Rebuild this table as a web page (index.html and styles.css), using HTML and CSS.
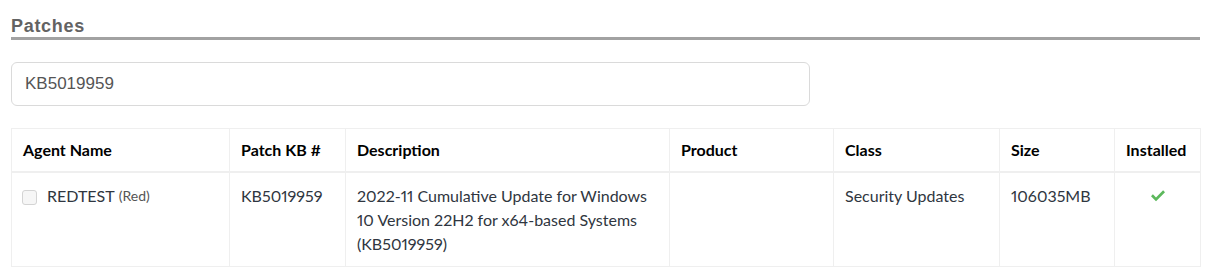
FILE: index.html
```html
<!DOCTYPE html>
<html>
<head>
<meta charset="utf-8">
<link rel="stylesheet" href="styles.css">
</head>
<body>
<div class="page">
  <h2 class="section-title">Patches</h2>
  <div class="search">
    <input class="search-input" type="text" value="KB5019959">
  </div>
  <table class="patch-table">
    <colgroup>
      <col class="c-agent">
      <col class="c-kb">
      <col class="c-desc">
      <col class="c-prod">
      <col class="c-class">
      <col class="c-size">
      <col class="c-inst">
    </colgroup>
    <thead>
      <tr>
        <th>Agent Name</th>
        <th>Patch KB #</th>
        <th>Description</th>
        <th>Product</th>
        <th>Class</th>
        <th>Size</th>
        <th>Installed</th>
      </tr>
    </thead>
    <tbody>
      <tr>
        <td><label class="agent"><span class="checkbox"></span><span class="agent-name">REDTEST</span> <small class="agent-group">(Red)</small></label></td>
        <td>KB5019959</td>
        <td>2022-11 Cumulative Update for Windows 10 Version 22H2 for x64-based Systems (KB5019959)</td>
        <td></td>
        <td>Security Updates</td>
        <td>106035MB</td>
        <td class="center"><svg class="check" width="16" height="12" viewBox="0 0 16 12"><path d="M1 6.2 L2.9 4.3 L6 7.4 L13.1 0.3 L15 2.2 L6 11.2 Z" fill="#5cb85c"/></svg></td>
      </tr>
    </tbody>
  </table>
</div>
</body>
</html>
```
FILE: styles.css
```css
html, body {
  margin: 0;
  padding: 0;
  background: #fff;
}
.page {
  margin-left: 11px;
  width: 1189px;
  padding-top: 16px;
}
.section-title {
  margin: 0;
  font-family: "Liberation Sans", Arial, sans-serif;
  font-weight: bold;
  font-size: 18px;
  letter-spacing: 0.7px;
  line-height: 20px;
  color: #636363;
  padding-bottom: 1px;
  border-bottom: 3px solid #a2a2a2;
}
.search {
  margin-top: 22px;
}
.search-input {
  box-sizing: border-box;
  width: 799px;
  height: 44px;
  border: 1px solid #dadada;
  border-radius: 6px;
  padding: 0 13px;
  font-family: "Liberation Sans", Arial, sans-serif;
  font-size: 17px;
  color: #555;
  outline: none;
  display: block;
}
.patch-table {
  margin-top: 22px;
  width: 1189px;
  border-collapse: collapse;
  table-layout: fixed;
  font-family: Lato, "Open Sans", sans-serif;
  font-size: 16px;
  line-height: 24px;
  color: #2f3640;
  font-variant-numeric: proportional-nums;
}
.c-agent { width: 218px; }
.c-kb { width: 116px; }
.c-desc { width: 324px; }
.c-prod { width: 164px; }
.c-class { width: 166px; }
.c-size { width: 115px; }
.c-inst { width: 86px; }
.patch-table th,
.patch-table td {
  border: 1px solid #efefef;
  text-align: left;
  vertical-align: top;
}
.patch-table th {
  padding: 9px 11px 9px 11px;
  font-weight: bold;
  color: #000;
  border-bottom: 2px solid #efefef;
}
.patch-table td {
  padding: 11px 11px 10px 11px;
}
.patch-table td.center {
  text-align: center;
}
.agent {
  display: flex;
  align-items: center;
  margin-left: -1px;
}
.checkbox {
  box-sizing: border-box;
  width: 15px;
  height: 15px;
  border: 1px solid #d4d4d4;
  border-radius: 3px;
  background: #f6f6f6;
  margin-right: 10px;
  margin-top: 2px;
  flex: none;
}
.agent-name {
  margin-right: 4px;
}
.agent-group {
  font-size: 14px;
  color: #555;
}
.check {
  display: inline-block;
  margin-top: 6px;
  vertical-align: top;
}
```
